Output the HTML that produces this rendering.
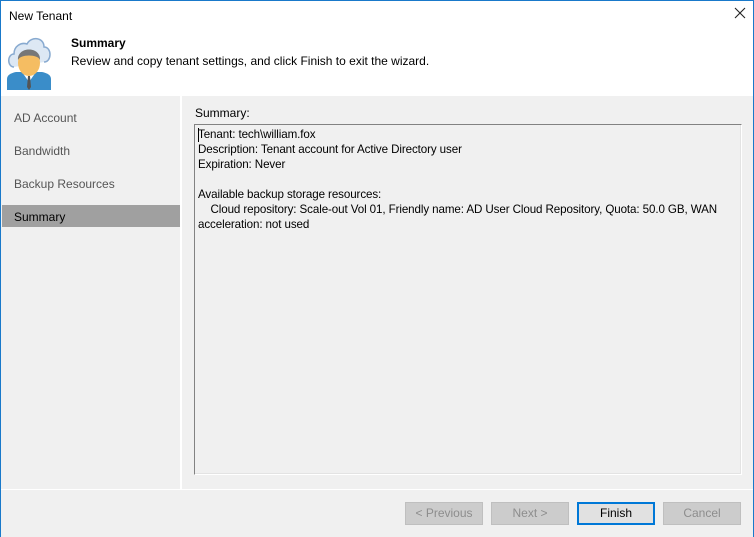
<!DOCTYPE html>
<html><head><meta charset="utf-8"><style>
*{margin:0;padding:0;box-sizing:border-box}
body{width:754px;height:537px;overflow:hidden;font-family:"Liberation Sans",sans-serif;font-size:12px;color:#000;background:#fff}
.win{position:absolute;left:0;top:0;width:754px;height:537px;border:1px solid #1979ca;background:#fff}
.t{position:absolute;font-size:12px;white-space:nowrap}
.body{position:absolute;left:0;top:95px;width:752px;height:441px;background:#f0f0f0}
.btn{position:absolute;top:501px;width:78px;height:23px;background:#cccccc;border:1px solid #bfbfbf;color:#8d8d8d;text-align:center;line-height:21px;font-size:12px}
</style></head><body>
<div class="win">
<div class="t" style="left:8px;top:8px">New Tenant</div>
<svg style="position:absolute;left:733px;top:6px" width="12" height="12" viewBox="0 0 12 12"><path d="M1 1L11 11M11 1L1 11" stroke="#222" stroke-width="1.1"/></svg>
<svg style="position:absolute;left:5px;top:33px" width="46" height="56" viewBox="0 0 46 56">
<path d="M8 33 C1 33 1 20 8 20 C8 12 15 8 21 10 C25 2 38 3 38 13 C46 13 46 28 38 28" fill="#dde8f4" stroke="#88aad0" stroke-width="1.5"/>
<path d="M1 56 L1 45 C1 41 5 39 10 38 L36 38 C41 39 45 41 45 45 L45 56 Z" fill="#3a8dc9"/>
<path d="M16 38 L23 48 L30 38 Z" fill="#fff"/>
<path d="M22 42 L24 42 L25 53 L23 56 L21 53 Z" fill="#555"/>
<ellipse cx="23" cy="29" rx="11" ry="13" fill="#f5bd62"/>
<path d="M12 26 C11 12 35 12 34 26 C32 20 14 20 12 26 Z" fill="#777"/>
</svg>
<div class="t" style="left:70px;top:35px;font-weight:bold">Summary</div>
<div class="t" style="left:70px;top:53px">Review and copy tenant settings, and click Finish to exit the wizard.</div>
<div class="body">
  <div style="position:absolute;left:179px;top:0;width:2px;height:393px;background:#fff"></div>
  <div style="position:absolute;left:0;top:393px;width:752px;height:1px;background:#fff"></div>
  <div class="t" style="left:13px;top:15px;color:#555">AD Account</div>
  <div class="t" style="left:13px;top:48px;color:#555">Bandwidth</div>
  <div class="t" style="left:13px;top:81px;color:#555">Backup Resources</div>
  <div style="position:absolute;left:1px;top:109px;width:178px;height:22px;background:#a0a0a0"></div>
  <div class="t" style="left:13px;top:114px">Summary</div>
  <div class="t" style="left:194px;top:10px">Summary:</div>
  <div style="position:absolute;left:193px;top:28px;width:548px;height:351px;border:1px solid #828282;border-right-color:#fff;border-bottom-color:#fff;box-shadow:inset -1px -1px 0 #e3e3e3;line-height:15px;padding:2px 0 0 3px;white-space:nowrap;font-size:11.6px;letter-spacing:-0.1px">
    <div style="position:absolute;left:3px;top:3px;width:1px;height:14px;background:#000"></div>
    Tenant: tech\william.fox<br>Description: Tenant account for Active Directory user<br>Expiration: Never<br><br>Available backup storage resources:<br>&nbsp;&nbsp;&nbsp;&nbsp;Cloud repository: Scale-out Vol 01, Friendly name: AD User Cloud Repository, Quota: 50.0 GB, WAN<br>acceleration: not used
  </div>
</div>
<div class="btn" style="left:404px">&lt; Previous</div>
<div class="btn" style="left:490px">Next &gt;</div>
<div class="btn" style="left:576px;background:#e1e1e1;border:2px solid #0078d7;color:#000;line-height:19px">Finish</div>
<div class="btn" style="left:662px">Cancel</div>
</div>
</body></html>
